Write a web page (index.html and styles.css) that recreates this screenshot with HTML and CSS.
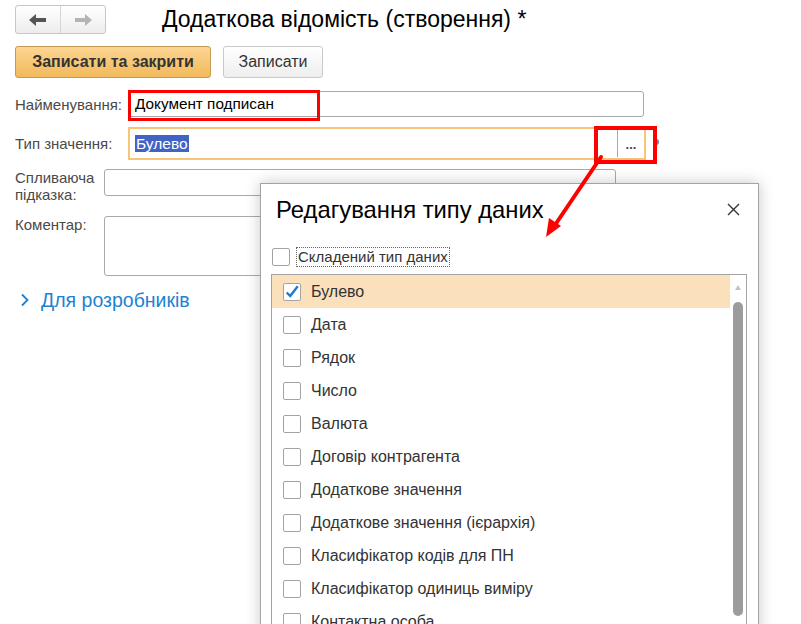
FILE: index.html
```html
<!DOCTYPE html>
<html lang="uk">
<head>
<meta charset="utf-8">
<title>Додаткова відомість</title>
<link rel="stylesheet" href="styles.css">
</head>
<body>
<div class="page">
  <div class="topbar">
    <div class="nav">
      <span class="nav-btn"><svg width="18" height="12" viewBox="0 0 18 12"><path d="M0 6 L7 0 L7 4 L17 4 L17 8 L7 8 L7 12 Z" fill="#555"/></svg></span>
      <span class="nav-btn"><svg width="18" height="12" viewBox="0 0 18 12"><path d="M18 6 L11 0 L11 4 L1 4 L1 8 L11 8 L11 12 Z" fill="#b4b4b4"/></svg></span>
    </div>
    <h1 class="title">Додаткова відомість (створення) *</h1>
  </div>
  <div class="actions">
    <button class="btn btn-primary">Записати та закрити</button>
    <button class="btn btn-plain">Записати</button>
  </div>
  <div class="form">
    <div class="row row-name">
      <label class="lbl lbl-wide">Найменування:</label>
      <div class="input input-name">Документ подписан</div>
    </div>
    <div class="row row-type">
      <label class="lbl lbl-wide">Тип значення:</label>
      <div class="input-type"><span class="sel">Булево</span><span class="pick">...</span></div>
      <span class="hint-dot"></span>
    </div>
    <div class="row row-tip">
      <label class="lbl lbl-narrow">Спливаюча<br>підказка:</label>
      <div class="input input-tip"></div>
    </div>
    <div class="row row-comment">
      <label class="lbl lbl-narrow">Коментар:</label>
      <div class="input input-area"></div>
    </div>
  </div>
  <div class="group">
    <svg width="10" height="14" viewBox="0 0 10 14"><path d="M2 1.5 L7.5 7 L2 12.5" fill="none" stroke="#1e82d2" stroke-width="1.8"/></svg>
    <span>Для розробників</span>
  </div>
</div>

<div class="dialog">
  <div class="dlg-head">
    <span class="dlg-title">Редагування типу даних</span>
    <svg class="dlg-close" width="13" height="13" viewBox="0 0 13 13"><path d="M1 1 L12 12 M12 1 L1 12" stroke="#333" stroke-width="1.4"/></svg>
  </div>
  <div class="compound">
    <span class="cb"></span>
    <span class="compound-text">Складений тип даних</span>
  </div>
  <div class="list">
    <div class="items">
      <div class="item item-on"><span class="cb cb-on"><svg width="18" height="18" viewBox="0 0 18 18"><path d="M3 9.5 L7 13.5 L15.5 2.5" fill="none" stroke="#1a78d0" stroke-width="2.6"/></svg></span>Булево</div>
      <div class="item"><span class="cb"></span>Дата</div>
      <div class="item"><span class="cb"></span>Рядок</div>
      <div class="item"><span class="cb"></span>Число</div>
      <div class="item"><span class="cb"></span>Валюта</div>
      <div class="item"><span class="cb"></span>Договір контрагента</div>
      <div class="item"><span class="cb"></span>Додаткове значення</div>
      <div class="item"><span class="cb"></span>Додаткове значення (ієрархія)</div>
      <div class="item"><span class="cb"></span>Класифікатор кодів для ПН</div>
      <div class="item"><span class="cb"></span>Класифікатор одиниць виміру</div>
      <div class="item"><span class="cb"></span>Контактна особа</div>
    </div>
    <div class="sb">
      <span class="sb-up"></span>
      <span class="sb-thumb"></span>
      <span class="sb-rest"></span>
    </div>
  </div>
</div>

<div class="annot annot-name"></div>
<div class="annot annot-pick"></div>
<svg class="arrow" width="801" height="624" viewBox="0 0 801 624">
  <line x1="601" y1="157" x2="555" y2="225" stroke="#ff0000" stroke-width="4" stroke-linecap="round"/>
  <polygon points="546,237 561,226 549,218" fill="#ff0000"/>
</svg>
</body>
</html>
```

FILE: styles.css
```css
html, body {
  margin: 0;
  padding: 0;
}
body {
  width: 801px;
  height: 624px;
  overflow: hidden;
  position: relative;
  background: #fff;
  font-family: "Liberation Sans", Arial, sans-serif;
  color: #333;
}
.page {
  padding: 5px 0 0 15px;
}
.topbar {
  display: flex;
  align-items: center;
  height: 29px;
}
.nav {
  display: flex;
  width: 91px;
  height: 29px;
  box-sizing: border-box;
  border: 1px solid #c6c6c6;
  border-radius: 3px;
  background: linear-gradient(#ffffff, #ededed);
}
.nav-btn {
  flex: 1;
  display: flex;
  align-items: center;
  justify-content: center;
}
.nav-btn + .nav-btn {
  border-left: 1px solid #d6d6d6;
}
.title {
  margin: 0 0 0 56px;
  font-size: 23px;
  font-weight: normal;
  line-height: 31px;
  color: #000;
}
.actions {
  display: flex;
  gap: 12px;
  margin-top: 12px;
}
.btn {
  height: 32px;
  box-sizing: border-box;
  border-radius: 3px;
  font-family: inherit;
  color: #333;
  padding: 0;
}
.btn-primary {
  width: 196px;
  font-size: 16px;
  font-weight: bold;
  border: 1px solid #c49a55;
  background: linear-gradient(#fcd692, #f2b95c);
}
.btn-plain {
  width: 100px;
  font-size: 16px;
  border: 1px solid #c9c9c9;
  background: linear-gradient(#ffffff, #eeeeee);
}
.form {
  margin-top: 13px;
}
.row {
  display: flex;
  align-items: center;
}
.lbl {
  font-size: 15px;
  color: #4a4a4a;
  line-height: 17px;
  flex: none;
}
.lbl-wide {
  width: 113px;
}
.lbl-narrow {
  width: 89px;
}
.input {
  box-sizing: border-box;
  border: 1px solid #a9a9a9;
  border-radius: 3px;
  background: #fff;
}
.input-name {
  width: 516px;
  height: 26px;
  padding-left: 6px;
  font-size: 15.3px;
  line-height: 24px;
  color: #000;
}
.row-type {
  margin-top: 10px;
  position: relative;
}
.input-type {
  box-sizing: border-box;
  width: 518px;
  height: 33px;
  border: 2px solid #f8c477;
  display: flex;
  align-items: center;
  padding-left: 5px;
}
.sel {
  background: #4163c6;
  color: #fff;
  font-size: 15.5px;
  line-height: 17px;
  padding: 0 1px;
}
.pick {
  margin-left: auto;
  width: 27px;
  height: 27px;
  border-left: 1px solid #a8a8a8;
  display: flex;
  align-items: center;
  justify-content: center;
  font-size: 13px;
  font-weight: bold;
  color: #444;
  padding-top: 2px;
  box-sizing: border-box;
}
.hint-dot {
  width: 6px;
  height: 6px;
  border-radius: 50%;
  background: #3b8ed8;
  margin-left: 7px;
  margin-top: -3px;
}
.row-tip {
  margin-top: 9px;
  align-items: flex-start;
}
.input-tip {
  width: 512px;
  height: 27px;
}
.row-comment {
  margin-top: 13px;
  align-items: flex-start;
}
.input-area {
  width: 512px;
  height: 60px;
}
.group {
  display: flex;
  align-items: center;
  gap: 11px;
  margin-top: 14px;
  padding-left: 5px;
  height: 20px;
  font-size: 19.5px;
  color: #1e82d2;
}

/* dialog */
.dialog {
  position: absolute;
  left: 260px;
  top: 183px;
  width: 499px;
  height: 470px;
  box-sizing: border-box;
  border: 1px solid #a3a3a3;
  background: #fff;
  box-shadow: 0 0 14px rgba(0, 0, 0, 0.22);
}
.dlg-head {
  display: flex;
  align-items: center;
  justify-content: space-between;
  height: 51px;
  padding: 0 18px 0 15px;
}
.dlg-title {
  font-size: 23.8px;
  color: #000;
}
.compound {
  display: flex;
  align-items: center;
  gap: 7px;
  margin-top: 13px;
  padding-left: 11px;
}
.compound-text {
  font-size: 15px;
  color: #333;
  line-height: 18px;
  outline: 1px dotted #666;
  padding: 0 1px;
}
.cb {
  flex: none;
  width: 18px;
  height: 18px;
  box-sizing: border-box;
  border: 1px solid #a3a3a3;
  border-radius: 2px;
  background: #fff;
  display: flex;
  align-items: center;
  justify-content: center;
}
.cb svg {
  display: block;
}
.list {
  margin: 8px 0 0 10px;
  width: 476px;
  height: 420px;
  box-sizing: border-box;
  border: 1px solid #a3a3a3;
  display: flex;
}
.items {
  width: 458px;
}
.item {
  height: 33px;
  display: flex;
  align-items: center;
  gap: 10px;
  padding-left: 11px;
  font-size: 16px;
  color: #333;
}
.item-on {
  background: #fbe0bc;
}
.sb {
  width: 16px;
  display: flex;
  flex-direction: column;
  align-items: center;
}
.sb-up {
  margin-top: 10px;
  width: 0;
  height: 0;
  border-left: 3px solid transparent;
  border-right: 3px solid transparent;
  border-bottom: 5px solid #c4c4c4;
}
.sb-thumb {
  margin-top: 12px;
  width: 10px;
  height: 314px;
  border-radius: 5px;
  background: #9c9c9c;
  flex: none;
}
.sb-rest {
  margin-top: -4px;
  width: 10px;
  flex: 1;
  background: #dadada;
  position: relative;
  z-index: -1;
}

/* annotations */
.annot {
  position: absolute;
  box-sizing: border-box;
  border: 3px solid #ff0000;
}
.annot-name {
  left: 128px;
  top: 90px;
  width: 192px;
  height: 31px;
}
.annot-pick {
  left: 594px;
  top: 126px;
  width: 63px;
  height: 38px;
  border-width: 4px;
}
.arrow {
  position: absolute;
  left: 0;
  top: 0;
}
```
